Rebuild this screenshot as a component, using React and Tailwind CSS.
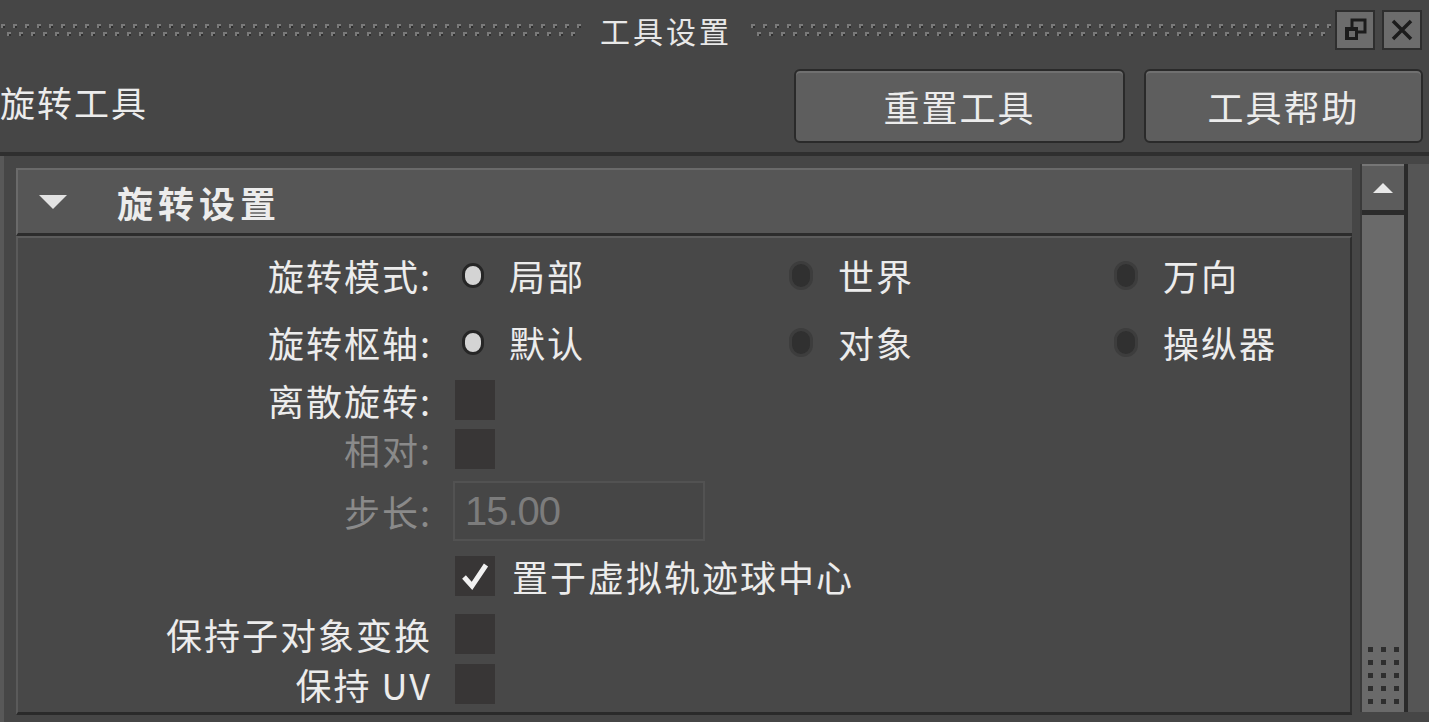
import React from 'react';

const cjk = { fontFamily: '"Noto Sans CJK SC", "Noto Sans", sans-serif' };

function Grip({ className }) {
  return (
    <svg className={className} height="16" preserveAspectRatio="none">
      <defs>
        <pattern id="grip" width="12" height="16" patternUnits="userSpaceOnUse">
          <rect x="1" y="1" width="4" height="4" fill="#7a7a7a" />
          <rect x="7" y="9" width="4" height="4" fill="#7a7a7a" />
          <rect x="3" y="3" width="2" height="2" fill="#2f2f2f" />
          <rect x="9" y="11" width="2" height="2" fill="#2f2f2f" />
        </pattern>
      </defs>
      <rect width="100%" height="16" fill="url(#grip)" />
    </svg>
  );
}

function Radio({ on, label, w }) {
  return (
    <div className={`flex items-center shrink-0 ${w}`}>
      <span
        className={
          on
            ? 'ml-[7px] w-[22px] h-[25px] rounded-full bg-[#d4d4d4] border-[3px] border-[#262626] shrink-0'
            : 'ml-[6px] w-[24px] h-[29px] rounded-full bg-[#303030] border-[3px] border-[#3d3d3d] shrink-0'
        }
      />
      <span className="ml-[25px] text-[36px] leading-none tracking-[2px] text-[#ececec] whitespace-nowrap">{label}</span>
    </div>
  );
}

function Box({ checked }) {
  return (
    <span className="w-[40px] h-[40px] shrink-0 bg-[#383636] flex items-center justify-center">
      {checked && (
        <svg width="30" height="30" viewBox="0 0 30 30">
          <path d="M4 16 L12 25 L26 4" fill="none" stroke="#f2f2f2" strokeWidth="5" strokeLinejoin="miter" />
        </svg>
      )}
    </span>
  );
}

function Row({ h, label, dim, children }) {
  return (
    <div className={`flex items-center ${h}`}>
      <div
        className={`w-[414px] -mr-[2px] shrink-0 text-right text-[36px] leading-none tracking-[2px] whitespace-nowrap ${dim ? 'text-[#8a8a8a]' : 'text-[#ececec]'}`}
      >
        {label}
      </div>
      <div className="flex items-center ml-[25px]">{children}</div>
    </div>
  );
}

export default function App() {
  return (
    <div className="w-[1429px] h-[722px] overflow-hidden bg-[#464646] flex flex-col" style={cjk}>
      {/* title bar */}
      <div className="h-[60px] flex items-center">
        <Grip className="w-[582px] mt-[2px]" />
        <div className="w-[168px] text-center text-[30px] leading-none text-[#e8e8e8] tracking-[3px]">工具设置</div>
        <Grip className="w-[582px] mt-[2px]" />
        <div className="ml-[3px] w-[40px] h-[40px] border-2 border-[#2e2e2e] bg-[#6c6c6c] flex items-center justify-center">
          <svg width="28" height="28" viewBox="0 0 28 28">
            <rect x="11" y="4" width="13" height="12" fill="none" stroke="#1c1c1c" strokeWidth="3" />
            <rect x="4" y="11" width="13" height="13" fill="#1c1c1c" />
            <rect x="8" y="15" width="6" height="6" fill="#6c6c6c" />
          </svg>
        </div>
        <div className="ml-[7px] w-[40px] h-[40px] border-2 border-[#2e2e2e] bg-[#6c6c6c] flex items-center justify-center">
          <svg width="26" height="26" viewBox="0 0 26 26">
            <path d="M4 4 L22 22 M22 4 L4 22" stroke="#1c1c1c" strokeWidth="3.5" />
          </svg>
        </div>
      </div>

      {/* tool row */}
      <div className="h-[92px] flex items-center">
        <div className="flex-1 text-[35px] leading-none tracking-[2px] text-[#ececec] pb-[10px]">旋转工具</div>
        <button className="w-[331px] h-[74px] mr-[19px] rounded-[6px] border-2 border-[#2a2a2a] bg-[#5e5e5e] shadow-[inset_0_2px_0_#707070] text-[36px] leading-none tracking-[2px] text-[#ececec]">
          重置工具
        </button>
        <button className="w-[279px] h-[74px] mr-[6px] rounded-[6px] border-2 border-[#2a2a2a] bg-[#5e5e5e] shadow-[inset_0_2px_0_#707070] text-[36px] leading-none tracking-[2px] text-[#ececec]">
          工具帮助
        </button>
      </div>

      {/* main area */}
      <div className="flex-1 flex border-t-4 border-[#2f2f2f]">
        <div className="w-[1352px] flex flex-col pl-[12px] pt-[12px] border-l-4 border-[#585858]">
          <div className="h-[68px] flex items-center bg-[#565656] border-t-2 border-[#6a6a6a] border-l-2 border-b-[3px] border-b-[#2c2c2c]">
            <svg width="30" height="16" viewBox="0 0 30 16" className="ml-[20px]">
              <path d="M1 1 L29 1 L15 15 Z" fill="#e2e2e2" />
            </svg>
            <span className="ml-[49px] text-[36px] font-bold leading-none text-[#ececec] tracking-[5px]">旋转设置</span>
          </div>
          <div className="flex-1 bg-[#484848] border-t-2 border-[#5c5c5c] border-l-2 border-l-[#5a5a5a] border-b-[3px] border-b-[#2a2a2a] border-r-2 border-r-[#2e2e2e] pt-[6px] mb-[7px]">
            <Row h="h-[62px]" label="旋转模式:">
              <Radio on label="局部" w="w-[328px]" />
              <Radio label="世界" w="w-[325px]" />
              <Radio label="万向" w="w-[200px]" />
            </Row>
            <Row h="h-[72px]" label="旋转枢轴:">
              <Radio on label="默认" w="w-[328px]" />
              <Radio label="对象" w="w-[325px]" />
              <Radio label="操纵器" w="w-[200px]" />
            </Row>
            <Row h="h-[44px]" label="离散旋转:">
              <Box />
            </Row>
            <Row h="h-[54px]" label="相对:" dim>
              <Box />
            </Row>
            <Row h="h-[70px]" label="步长:" dim>
              <div className="-ml-[2px] w-[252px] h-[60px] border-2 border-[#525252] bg-[#464646] flex items-center px-[10px]">
                <span className="text-[40px] leading-none text-[#7c7c7c] tracking-tight" style={{ fontFamily: '"Liberation Sans", sans-serif' }}>
                  15.00
                </span>
              </div>
            </Row>
            <Row h="h-[60px]" label="">
              <Box checked />
              <span className="ml-[17px] text-[36px] leading-none tracking-[2px] text-[#ececec] whitespace-nowrap">置于虚拟轨迹球中心</span>
            </Row>
            <Row h="h-[56px]" label="保持子对象变换">
              <Box />
            </Row>
            <Row h="h-[44px]" label="保持 UV">
              <Box />
            </Row>
          </div>
        </div>

        {/* scrollbar */}
        <div className="flex-1 flex pt-[8px] pl-[8px] pb-[10px]">
          <div className="w-[48px] flex flex-col border-l-2 border-[#3a3a3a] border-r-[4px] border-r-[#2a2a2a]">
            <div className="h-[46px] bg-[#5c5c5c] border-t-2 border-[#767676] flex items-center justify-center">
              <svg width="22" height="12" viewBox="0 0 22 12">
                <path d="M11 1 L21 11 L1 11 Z" fill="#e8e8e8" />
              </svg>
            </div>
            <div className="flex-1 bg-[#6a6a6a] border-t-[5px] border-[#2c2c2c] flex flex-col justify-end items-center pb-[8px]">
              <div className="grid grid-cols-3 gap-x-[8px] gap-y-[8px]">
                {Array.from({ length: 15 }).map((_, i) => (
                  <span key={i} className="w-[5px] h-[5px] bg-[#2e2e2e]" />
                ))}
              </div>
            </div>
          </div>
          <div className="flex-1 bg-[#555555]" />
        </div>
      </div>
    </div>
  );
}
